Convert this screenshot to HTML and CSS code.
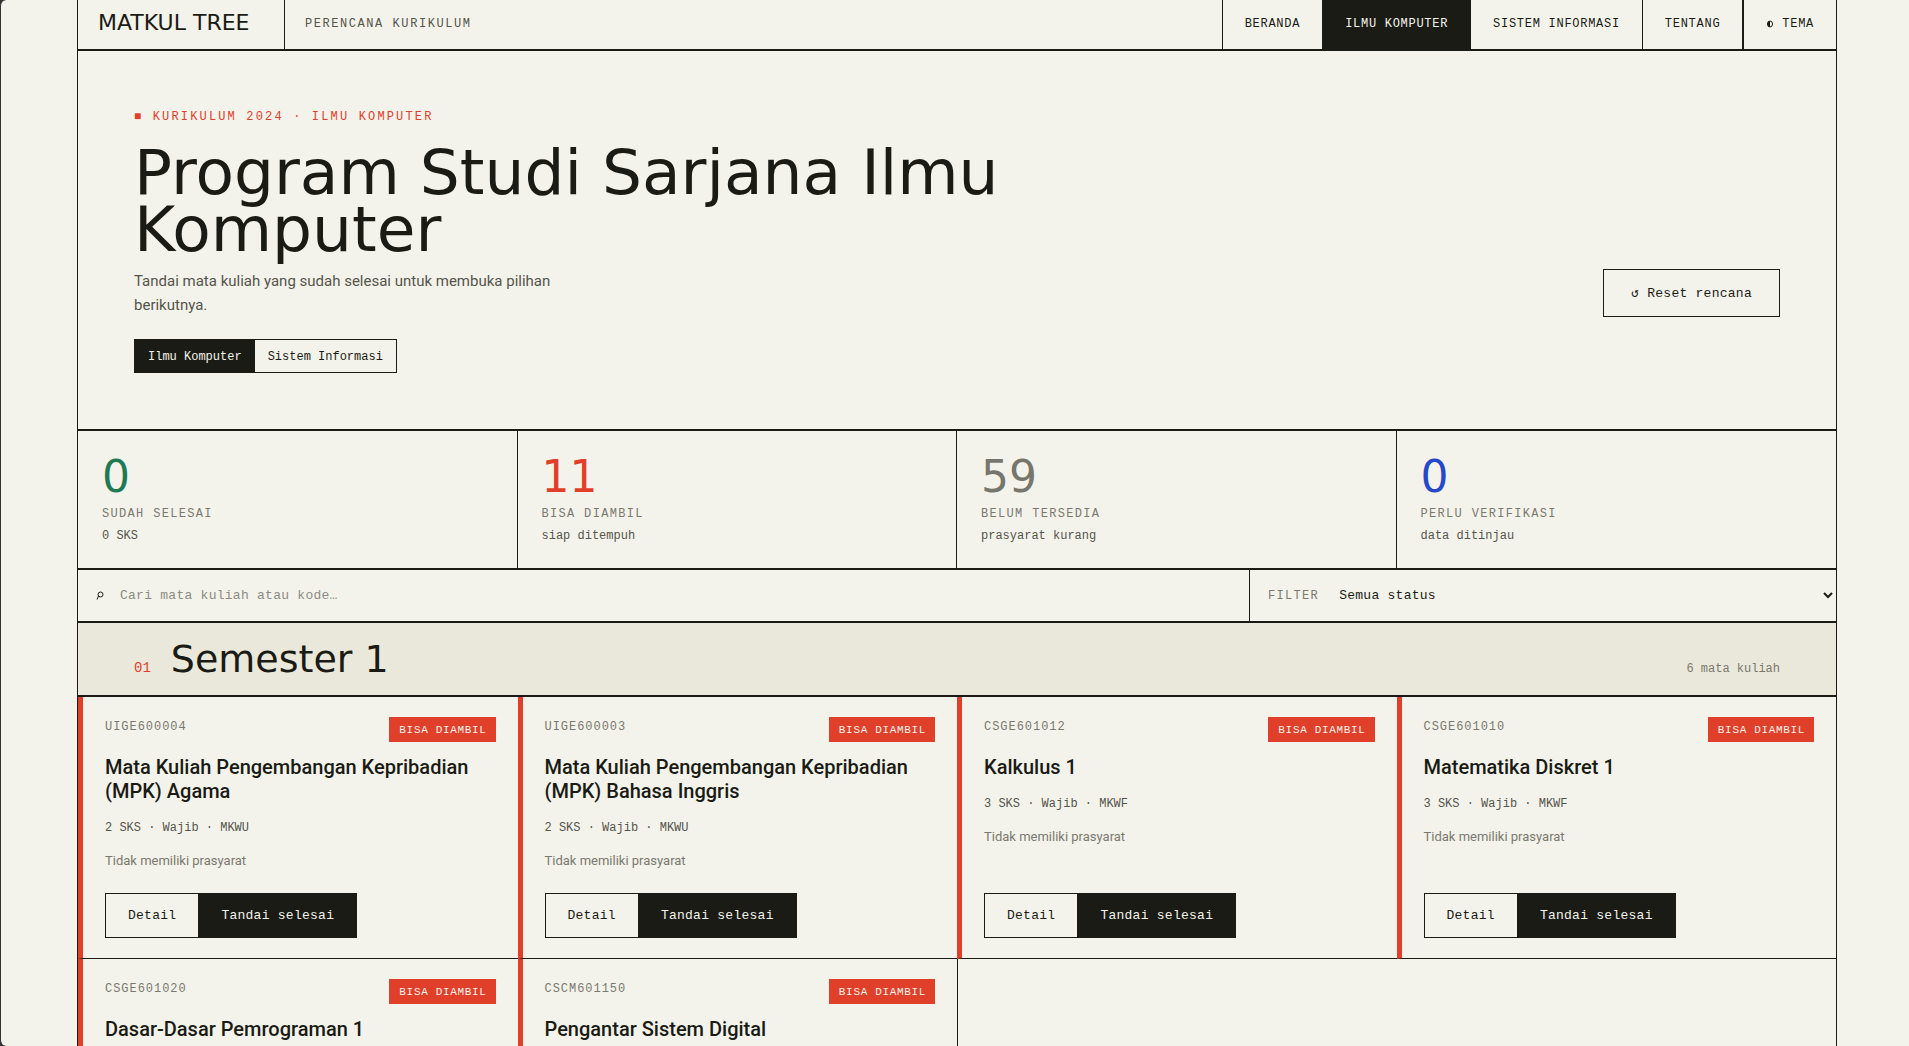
FILE: index.html
```html
<!DOCTYPE html>
<html lang="id">
<head>
    <meta charset="UTF-8">
    <meta name="viewport" content="width=device-width, initial-scale=1.0">
    <title>Matkul Tree - Ilmu Komputer</title>
    <link rel="stylesheet" href="styles.css">
</head>
<body>

    <div class="shell">
        <header class="topbar">
            <a class="brand" href="#">MATKUL TREE</a>
            <span class="tagline">PERENCANA KURIKULUM</span>
            <nav class="nav">
                <a href="#">BERANDA</a>
                <a href="#" class="active">ILMU KOMPUTER</a>
                <a href="#">SISTEM INFORMASI</a>
                <a href="#">TENTANG</a>
                <button type="button" class="theme-toggle">
                    <svg class="theme-icon" viewBox="0 0 8 10" aria-hidden="true">
                        <ellipse cx="4" cy="5" rx="2.5" ry="3" fill="none" stroke="currentColor"/>
                        <path d="M4 2a2.500 3 0 0 0 0 6z" fill="currentColor"/>
                    </svg>
                    TEMA
                </button>
            </nav>
        </header>

        <main>
            <section class="hero">
                <div class="hero-top">
                    <div class="hero-text">
                        <p class="eyebrow">■ KURIKULUM 2024 · ILMU KOMPUTER</p>
                        <h1>Program Studi Sarjana Ilmu Komputer</h1>
                        <p class="lead">Tandai mata kuliah yang sudah selesai untuk membuka pilihan berikutnya.</p>
                    </div>
                    <button type="button" class="btn reset">↺ Reset rencana</button>
                </div>
                <div class="switch">
                    <button type="button" class="active">Ilmu Komputer</button>
                    <button type="button">Sistem Informasi</button>
                </div>
            </section>

            <section class="stats">
                <div class="stat">
                    <div class="number green">0</div>
                    <div class="label">SUDAH SELESAI</div>
                    <div class="note">0 SKS</div>
                </div>
                <div class="stat">
                    <div class="number red">11</div>
                    <div class="label">BISA DIAMBIL</div>
                    <div class="note">siap ditempuh</div>
                </div>
                <div class="stat">
                    <div class="number gray">59</div>
                    <div class="label">BELUM TERSEDIA</div>
                    <div class="note">prasyarat kurang</div>
                </div>
                <div class="stat">
                    <div class="number blue">0</div>
                    <div class="label">PERLU VERIFIKASI</div>
                    <div class="note">data ditinjau</div>
                </div>
            </section>

            <section class="toolbar">
                <div class="search">
                    <label for="search" aria-label="Cari mata kuliah">
                        <svg class="search-icon" viewBox="0 0 8 10" fill="none" stroke="currentColor" aria-hidden="true">
                            <circle cx="4.500" cy="3.500" r="2.500"/>
                            <path d="M2.500 5L1 8.500"/>
                        </svg>
                    </label>
                    <input type="text" id="search" placeholder="Cari mata kuliah atau kode…">
                </div>
                <div class="filter">
                    <label class="label" for="status">FILTER</label>
                    <select id="status">
                        <option>Semua status</option>
                        <option>Sudah selesai</option>
                        <option>Bisa diambil</option>
                        <option>Belum tersedia</option>
                    </select>
                </div>
            </section>

            <section class="semester">
                <div class="semester-head">
                    <span class="semester-no">01</span>
                    <h2>Semester 1</h2>
                    <span class="semester-count">6 mata kuliah</span>
                </div>

                <div class="courses">
                    <article class="card">
                        <div class="card-head"><span class="code">UIGE600004</span><span class="badge">BISA DIAMBIL</span></div>
                        <h3>Mata Kuliah Pengembangan Kepribadian (MPK) Agama</h3>
                        <p class="meta">2 SKS · Wajib · MKWU</p>
                        <p class="prereq">Tidak memiliki prasyarat</p>
                        <div class="actions"><button type="button" class="btn">Detail</button><button type="button" class="btn dark">Tandai selesai</button></div>
                    </article>
                    <article class="card">
                        <div class="card-head"><span class="code">UIGE600003</span><span class="badge">BISA DIAMBIL</span></div>
                        <h3>Mata Kuliah Pengembangan Kepribadian (MPK) Bahasa Inggris</h3>
                        <p class="meta">2 SKS · Wajib · MKWU</p>
                        <p class="prereq">Tidak memiliki prasyarat</p>
                        <div class="actions"><button type="button" class="btn">Detail</button><button type="button" class="btn dark">Tandai selesai</button></div>
                    </article>
                    <article class="card">
                        <div class="card-head"><span class="code">CSGE601012</span><span class="badge">BISA DIAMBIL</span></div>
                        <h3>Kalkulus 1</h3>
                        <p class="meta">3 SKS · Wajib · MKWF</p>
                        <p class="prereq">Tidak memiliki prasyarat</p>
                        <div class="actions"><button type="button" class="btn">Detail</button><button type="button" class="btn dark">Tandai selesai</button></div>
                    </article>
                    <article class="card">
                        <div class="card-head"><span class="code">CSGE601010</span><span class="badge">BISA DIAMBIL</span></div>
                        <h3>Matematika Diskret 1</h3>
                        <p class="meta">3 SKS · Wajib · MKWF</p>
                        <p class="prereq">Tidak memiliki prasyarat</p>
                        <div class="actions"><button type="button" class="btn">Detail</button><button type="button" class="btn dark">Tandai selesai</button></div>
                    </article>
                    <article class="card">
                        <div class="card-head"><span class="code">CSGE601020</span><span class="badge">BISA DIAMBIL</span></div>
                        <h3>Dasar-Dasar Pemrograman 1</h3>
                    </article>
                    <article class="card">
                        <div class="card-head"><span class="code">CSCM601150</span><span class="badge">BISA DIAMBIL</span></div>
                        <h3>Pengantar Sistem Digital</h3>
                    </article>
                </div>
            </section>
        </main>
    </div>

</body>
</html>
```
FILE: styles.css
```css
:root {
    --paper: #f4f3eb;
    --sand: #eae8da;
    --ink: #1a1b14;
    --muted: #55554c;
    --faint: #7a796f;
    --red: #e0402a;
    --display: "DejaVu Sans", sans-serif;
    --sans: Roboto, sans-serif;
    --mono: "Liberation Mono", monospace;
}

* {
    box-sizing: border-box;
}

html {
    background: #333333;
}

body {
    margin: 0;
    height: 100vh;
    overflow: hidden;
    padding-left: 4px;
    border-left: 1px solid #333333;
    border-radius: 6px 0 0 6px;
    background: var(--paper);
    color: var(--ink);
    font-family: var(--mono);
    font-size: 12px;
    line-height: 18px;
}

h1, h2, h3, p {
    margin: 0;
}

a {
    color: inherit;
    text-decoration: none;
}

button, input, select {
    font-family: inherit;
    color: inherit;
    background: none;
    border: none;
    border-radius: 0;
}

.shell {
    max-width: 1760px;
    min-height: 100%;
    margin: 0 auto;
    border-left: 1px solid var(--ink);
    border-right: 1px solid var(--ink);
}

/* top bar */
.topbar {
    display: flex;
    align-items: stretch;
    border-bottom: 2px solid var(--ink);
}

.brand {
    display: flex;
    align-items: center;
    min-width: 207px;
    padding: 0 20px 4px;
    border-right: 1px solid var(--ink);
    font-family: var(--display);
    font-size: 22px;
}

.tagline {
    padding: 15px 20px 16px;
    color: var(--muted);
    letter-spacing: 0.13em;
}

.nav {
    display: flex;
    margin-left: auto;
}

.nav a,
.theme-toggle {
    display: flex;
    align-items: center;
    padding: 15px 22px 16px;
    border-left: 1px solid var(--ink);
    font-size: 12px;
    line-height: 18px;
    letter-spacing: 0.06em;
}

.nav .active {
    background: var(--ink);
    color: var(--paper);
}

.theme-toggle {
    gap: 8px;
    border-left-width: 2px;
    cursor: pointer;
}

.theme-icon,
.search-icon {
    display: block;
    width: 8px;
    height: 10px;
}

/* hero */
.hero {
    padding: 57px 56px 56px;
    border-bottom: 2px solid var(--ink);
}

.hero-top {
    display: flex;
    justify-content: space-between;
    align-items: flex-end;
}

.eyebrow {
    color: var(--red);
    letter-spacing: 0.18em;
}

h1 {
    max-width: 960px;
    margin: 18px 0 11px;
    font-family: var(--display);
    font-size: 63px;
    font-weight: 400;
    line-height: 57px;
}

.lead {
    max-width: 460px;
    font-family: var(--sans);
    font-size: 15px;
    line-height: 24px;
    color: var(--muted);
}

.btn {
    padding: 13px 22px;
    border: 1px solid var(--ink);
    font-size: 13px;
    line-height: 17px;
    letter-spacing: 0.02em;
    cursor: pointer;
}

.btn.dark {
    background: var(--ink);
    color: var(--paper);
}

.reset {
    padding: 15px 27px 14px;
}

.switch {
    display: inline-flex;
    margin-top: 22px;
    border: 1px solid var(--ink);
    vertical-align: top;
}

.switch button {
    padding: 8px 13px 6px;
    font-size: 12px;
    line-height: 18px;
    cursor: pointer;
}

.switch .active {
    background: var(--ink);
    color: var(--paper);
}

/* stats */
.stats {
    display: grid;
    grid-template-columns: repeat(4, 1fr);
    border-bottom: 2px solid var(--ink);
}

.stat {
    padding: 24px 24px 23px;
    border-right: 1px solid var(--ink);
}

.stat:last-child {
    border-right: none;
}

.number {
    font-family: var(--display);
    font-size: 44px;
    line-height: 43px;
}

.label {
    color: var(--faint);
    letter-spacing: 0.11em;
}

.number + .label {
    margin: 7px 0 4px;
}

.note {
    color: var(--muted);
}

.green { color: #1f7a54; }
.red { color: var(--red); }
.gray { color: #77766c; }
.blue { color: #2549c9; }

/* search and filter */
.toolbar {
    display: grid;
    grid-template-columns: 2fr 1fr;
    border-bottom: 2px solid var(--ink);
}

.search,
.filter {
    display: flex;
    align-items: center;
    padding-left: 18px;
}

.search {
    gap: 16px;
    border-right: 1px solid var(--ink);
}

.filter {
    gap: 16px;
}

.search input,
.filter select {
    flex: 1;
    height: 51px;
    padding: 0;
    font-size: 13px;
    letter-spacing: 0.02em;
}

.search input::placeholder {
    color: #8c8b82;
}

/* semester */
.semester-head {
    display: flex;
    align-items: baseline;
    gap: 20px;
    padding: 16px 56px;
    background: var(--sand);
    border-bottom: 2px solid var(--ink);
}

.semester-no {
    font-size: 14px;
    color: var(--red);
}

h2 {
    font-family: var(--display);
    font-size: 38px;
    font-weight: 400;
    line-height: 40px;
}

.semester-count {
    margin-left: auto;
    color: var(--faint);
}

.courses {
    display: grid;
    grid-template-columns: repeat(4, 1fr);
}

.card {
    display: flex;
    flex-direction: column;
    margin-right: -1px;
    padding: 20px 22px;
    border-left: 5px solid var(--red);
    border-right: 1px solid var(--ink);
    border-bottom: 1px solid var(--ink);
}

.card-head {
    display: flex;
    justify-content: space-between;
    align-items: flex-start;
}

.code {
    padding-top: 1px;
    color: var(--faint);
    letter-spacing: 0.08em;
}

.badge {
    padding: 4px 9px 3px 10px;
    background: var(--red);
    color: var(--paper);
    font-size: 11px;
    letter-spacing: 0.06em;
}

h3 {
    margin: 13px 0 16px;
    font-family: var(--sans);
    font-size: 20px;
    font-weight: 500;
    line-height: 24px;
}

.meta {
    color: var(--muted);
}

.prereq {
    margin: 15px 0 23px;
    font-family: var(--sans);
    font-size: 13px;
    color: var(--faint);
}

.actions {
    display: flex;
    margin-top: auto;
}

.actions .btn:first-child {
    border-right: none;
}
```
